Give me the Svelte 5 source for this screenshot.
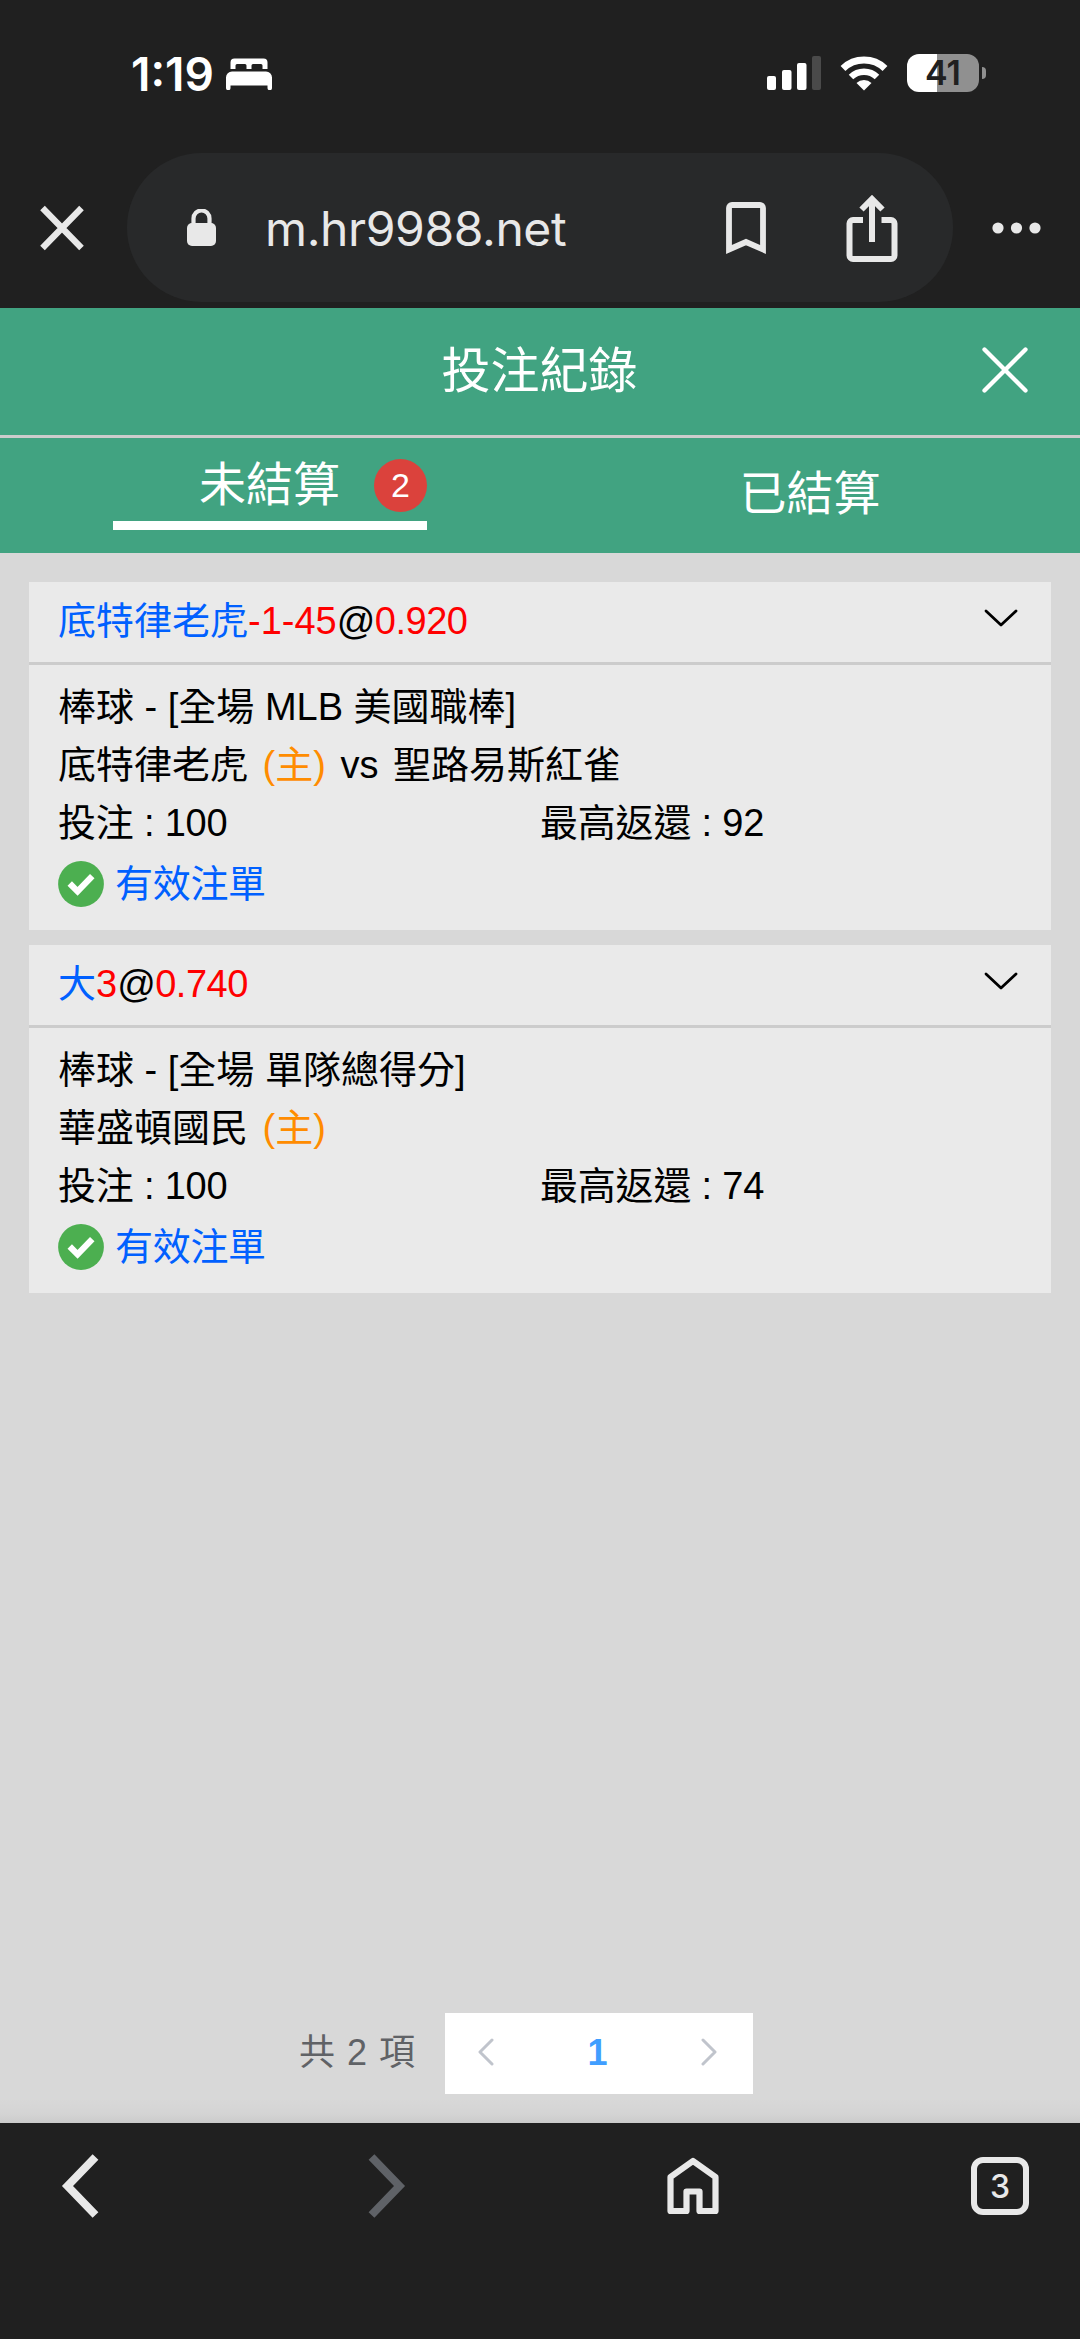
<script>
    const url = "m.hr9988.net";
    let activeTab = "open";

    const tabs = [
        { id: "open", label: "未結算", count: 2 },
        { id: "settled", label: "已結算", count: 0 },
    ];

    const bets = [
        {
            pick: "底特律老虎",
            line: "-1-45",
            odds: "0.920",
            sport: "棒球 - [全場 MLB 美國職棒]",
            home: "底特律老虎",
            away: "聖路易斯紅雀",
            stake: 100,
            payout: 92,
            status: "有效注單",
        },
        {
            pick: "大",
            line: "3",
            odds: "0.740",
            sport: "棒球 - [全場 單隊總得分]",
            home: "華盛頓國民",
            away: "",
            stake: 100,
            payout: 74,
            status: "有效注單",
        },
    ];
</script>

<div class="screen">
    <!-- Phone status bar -->
    <div class="status-bar">
        <span class="clock">1:19</span>
        <svg class="bed" width="46" height="32" viewBox="0 0 46 32" fill="#fff">
            <path d="M4.500 11V4.500a4 4 0 0 1 4-4h29a4 4 0 0 1 4 4V11h-5V7.500a1.500 1.500 0 0 0-1.500-1.500H27a1.500 1.500 0 0 0-1.500 1.500V11h-5V7.500A1.500 1.500 0 0 0 19 6h-8a1.500 1.500 0 0 0-1.500 1.500V11z" />
            <path d="M0 19.500a6 6 0 0 1 6-6h34a6 6 0 0 1 6 6V30a2 2 0 0 1-4.500 0v-2.500h-37V30A2 2 0 0 1 0 30z" />
        </svg>
        <svg class="signal" width="54" height="34" viewBox="0 0 54 34" fill="#fff">
            <rect x="0" y="20" width="9" height="14" rx="2" />
            <rect x="15" y="14" width="9.500" height="20" rx="2" />
            <rect x="30" y="7" width="9.500" height="27" rx="2" />
            <rect x="45" y="0" width="9" height="34" rx="2" fill="#4a4a4a" />
        </svg>
        <svg class="wifi" width="48" height="36" viewBox="0 0 48 36" fill="none" stroke="#fff">
            <path d="M3 13.500a30.500 30.500 0 0 1 42 0" stroke-width="7" />
            <path d="M11 22a18.800 18.800 0 0 1 26 0" stroke-width="6.500" />
            <path d="M24 35.500l-7.500-7.500a10.800 10.800 0 0 1 15 0z" fill="#fff" stroke="none" />
        </svg>
        <div class="battery"><span>41</span></div>
        <div class="battery-cap"></div>
    </div>

    <!-- Browser address bar -->
    <div class="address-bar">
        <svg class="stop" width="44" height="46" viewBox="0 0 44 46" stroke="#e8e8e8" stroke-width="6.400">
            <path d="M2.500 3l39 40M41.500 3l-39 40" />
        </svg>
        <div class="url-pill">
            <svg class="lock" width="29" height="38" viewBox="0 0 29 38">
                <path d="M6.500 16v-6.500a8 8 0 0 1 16 0V16" fill="none" stroke="#e8e8e8" stroke-width="4.200" />
                <rect y="14" width="29" height="23" rx="5" fill="#e8e8e8" />
            </svg>
            <span class="url">{url}</span>
            <svg class="bookmark" width="40" height="52" viewBox="0 0 40 52" fill="none" stroke="#e8e8e8" stroke-width="5.800">
                <path d="M3 47.500V6a3 3 0 0 1 3-3h28a3 3 0 0 1 3 3v41.500L20 40z" />
            </svg>
            <svg class="share" width="52" height="68" viewBox="0 0 52 68" fill="none" stroke="#e8e8e8" stroke-width="6">
                <path d="M17 26H7a3.500 3.500 0 0 0-3.500 3.500v32A3.500 3.500 0 0 0 7 65h38a3.500 3.500 0 0 0 3.500-3.500v-32A3.500 3.500 0 0 0 45 26H35.500" />
                <path d="M26 48V5M15.500 15.500L26 5l10.500 10.500" />
            </svg>
        </div>
        <svg class="more" width="50" height="12" viewBox="0 0 50 12" fill="#e8e8e8">
            <circle cx="6" cy="6" r="5.600" />
            <circle cx="24.500" cy="6" r="5.600" />
            <circle cx="43" cy="6" r="5.600" />
        </svg>
    </div>

    <!-- Page header -->
    <header class="page-header">
        <h1>投注紀錄</h1>
        <svg class="close" width="46" height="46" viewBox="0 0 46 46" stroke="#fff" stroke-width="4.300" stroke-linecap="round">
            <path d="M2.500 2.500l41 41M43.500 2.500l-41 41" />
        </svg>
    </header>

    <nav class="tabs">
        {#each tabs as tab}
            <div class="tab">
                <div class="tab-inner" class:active={tab.id === activeTab}>
                    <span>{tab.label}</span>
                    {#if tab.count}
                        <span class="badge">{tab.count}</span>
                    {/if}
                </div>
            </div>
        {/each}
    </nav>

    <main>
        {#each bets as bet}
            <section class="bet">
                <div class="bet-head">
                    <div>
                        <span class="blue">{bet.pick}</span><span class="red">{bet.line}</span><span class="odds">@<span class="red">{bet.odds}</span></span>
                    </div>
                    <svg width="34" height="18" viewBox="0 0 34 18" fill="none" stroke="#000" stroke-width="2.800" stroke-linecap="round" stroke-linejoin="round">
                        <path d="M2 2l15 14L32 2" />
                    </svg>
                </div>
                <div class="bet-body">
                    <div class="row">{bet.sport}</div>
                    <div class="row teams">
                        {bet.home} <span class="orange">(主)</span>
                        {#if bet.away}vs {bet.away}{/if}
                    </div>
                    <div class="row amounts">
                        <span>投注 : {bet.stake}</span>
                        <span>最高返還 : {bet.payout}</span>
                    </div>
                    <div class="state">
                        <svg width="46" height="46" viewBox="0 0 47 47">
                            <circle cx="23.500" cy="23.500" r="23.400" fill="#4caf50" />
                            <path d="M12 23l8 8L35 15.500" fill="none" stroke="#fff" stroke-width="6.400" />
                        </svg>
                        <span class="blue">{bet.status}</span>
                    </div>
                </div>
            </section>
        {/each}

        <div class="pagination">
            <span class="total">共 2 項</span>
            <div class="pager">
                <svg width="16" height="28" viewBox="0 0 16 28">
                    <path d="M14 2L2 14l12 12" />
                </svg>
                <span class="page">1</span>
                <svg width="16" height="28" viewBox="0 0 16 28">
                    <path d="M2 2l12 12L2 26" />
                </svg>
            </div>
        </div>
    </main>

    <!-- Browser toolbar -->
    <footer class="toolbar">
        <div class="tool">
            <svg width="38" height="64" viewBox="0 0 38 64" fill="none" stroke="#e8e8e8" stroke-width="8">
                <path d="M34.500 3L6.500 32l28 29" />
            </svg>
        </div>
        <div class="tool">
            <svg width="38" height="64" viewBox="0 0 38 64" fill="none" stroke="#5f6267" stroke-width="8">
                <path d="M3.500 3l28 29-28 29" />
            </svg>
        </div>
        <div class="tool">
            <svg width="52" height="58" viewBox="0 0 52 58" fill="none" stroke="#e8e8e8" stroke-width="6.200" stroke-linejoin="round">
                <path d="M3.500 54V20L26 4l22.500 16v34H32.500V34.500h-13V54z" />
            </svg>
        </div>
        <div class="tool">
            <div class="tab-count">3</div>
        </div>
    </footer>
</div>

<style>
    :global(body) {
        background: #202020;
    }

    .screen {
        width: 1080px;
        height: 2339px;
        display: flex;
        flex-direction: column;
        overflow: hidden;
        background: #202020;
        font-family: "Liberation Sans", "Noto Sans CJK TC", sans-serif;
    }

    svg {
        display: block;
        flex: none;
    }

    /* Status bar */
    .status-bar {
        height: 145px;
        box-sizing: border-box;
        padding: 0 94px 0 131px;
        display: flex;
        align-items: center;
        color: #fff;
        font-family: Inter, sans-serif;
    }

    .clock {
        width: 95px;
        padding-top: 2px;
        font-size: 46px;
        font-weight: 600;
    }

    .bed {
        margin-top: 2px;
    }

    .signal {
        margin-left: auto;
    }

    .wifi {
        margin-left: 19px;
    }

    .battery {
        width: 72px;
        height: 38px;
        margin-left: 19px;
        border-radius: 12px;
        background: linear-gradient(90deg, #fff 30px, #909090 30px);
        color: #202020;
        font-size: 34px;
        font-weight: 600;
        line-height: 38px;
        text-align: center;
    }

    .battery-cap {
        width: 4px;
        height: 12px;
        margin-left: 3px;
        border-radius: 0 4px 4px 0;
        background: #909090;
    }

    /* Address bar */
    .address-bar {
        height: 163px;
        padding: 8px 36px 6px 40px;
        box-sizing: border-box;
        display: flex;
        align-items: center;
    }

    .url-pill {
        flex: none;
        width: 826px;
        height: 149px;
        margin: 0 39px 0 43px;
        padding: 0 55px 0 60px;
        box-sizing: border-box;
        border-radius: 75px;
        background: #28292a;
        display: flex;
        align-items: center;
    }

    .url {
        margin-left: 49px;
        flex: 1;
        color: #e8e8e8;
        font-family: Inter, sans-serif;
        font-size: 48px;
        letter-spacing: -0.4px;
        line-height: 60px;
        padding-top: 2px;
    }

    .bookmark {
        margin-right: 80px;
    }

    /* Page header */
    .page-header {
        height: 130px;
        box-sizing: border-box;
        border-bottom: 3px solid #ccc;
        padding: 0 52px 4px 97px;
        display: flex;
        align-items: center;
        background: #41a381;
        color: #fff;
    }

    h1 {
        flex: 1;
        margin: 0;
        padding-top: 3px;
        font-size: 49px;
        font-weight: 400;
        line-height: 72px;
        text-align: center;
    }

    .tabs {
        height: 115px;
        display: flex;
        background: #41a381;
        color: #fff;
        font-size: 47px;
    }

    .tab {
        flex: 1;
        display: flex;
        align-items: center;
        justify-content: center;
        padding-bottom: 3px;
    }

    .tab-inner {
        display: flex;
        align-items: center;
        justify-content: flex-end;
        line-height: 66px;
    }

    .tab-inner.active {
        width: 314px;
        margin-bottom: 4px;
        border-bottom: 9px solid #fff;
        line-height: 60px;
        padding-bottom: 6px;
    }

    .badge {
        width: 53px;
        height: 53px;
        margin-left: 34px;
        margin-top: 2px;
        border-radius: 50%;
        background: #db423c;
        font-size: 34px;
        line-height: 53px;
        text-align: center;
    }

    /* Bet list */
    main {
        flex: 1;
        padding: 29px 29px;
        box-sizing: border-box;
        display: flex;
        flex-direction: column;
        gap: 15px;
        background: linear-gradient(to top, #cbcbcb, #d4d4d4 9px, #d8d8d8 24px);
        font-size: 38px;
        color: #000;
    }

    .bet {
        background: #eaeaea;
    }

    .bet-head {
        height: 83px;
        box-sizing: border-box;
        border-bottom: 3px solid #ccc;
        padding: 0 33px 2px 29px;
        display: flex;
        align-items: center;
        justify-content: space-between;
        line-height: 58px;
    }

    .bet-head svg {
        margin-bottom: 6px;
    }

    .odds {
        letter-spacing: -0.5px;
    }

    .bet-body {
        height: 265px;
        box-sizing: border-box;
        padding: 13px 29px 0;
    }

    .row {
        height: 58px;
        line-height: 58px;
        white-space: nowrap;
    }

    .teams {
        word-spacing: 4px;
    }

    .amounts {
        display: grid;
        grid-template-columns: 1fr 1fr;
        letter-spacing: -0.2px;
    }

    .state {
        height: 64px;
        display: flex;
        align-items: center;
        gap: 11px;
        line-height: 58px;
        letter-spacing: -0.3px;
    }

    .blue {
        color: #0060ff;
    }

    .red {
        color: #f00;
    }

    .orange {
        color: #ff8c00;
    }

    /* Pagination */
    .pagination {
        margin-top: auto;
        display: flex;
        align-items: center;
        padding-left: 270px;
        color: #606266;
        font-size: 36px;
    }

    .total {
        width: 146px;
        padding-bottom: 9px;
        white-space: nowrap;
        word-spacing: 2px;
    }

    .pager {
        width: 308px;
        height: 81px;
        box-sizing: border-box;
        padding: 0 36px 3px 33px;
        display: flex;
        align-items: center;
        justify-content: space-between;
        background: #fff;
    }

    .pager svg {
        fill: none;
        stroke: #c0c4cc;
        stroke-width: 3;
        stroke-linecap: round;
        stroke-linejoin: round;
    }

    .page {
        padding-top: 2px;
        color: #409eff;
        font-weight: 700;
    }

    /* Toolbar */
    .toolbar {
        height: 216px;
        box-sizing: border-box;
        padding: 31px 51px 0;
        display: flex;
        align-items: flex-start;
        justify-content: space-between;
    }

    .tool {
        width: 58px;
        height: 64px;
        display: flex;
        align-items: center;
        justify-content: center;
    }

    .tab-count {
        width: 58px;
        height: 58px;
        box-sizing: border-box;
        border: 6px solid #e8e8e8;
        border-radius: 12px;
        color: #e8e8e8;
        font-family: Inter, sans-serif;
        font-size: 32px;
        font-weight: 500;
        line-height: 47px;
        text-align: center;
    }
</style>
